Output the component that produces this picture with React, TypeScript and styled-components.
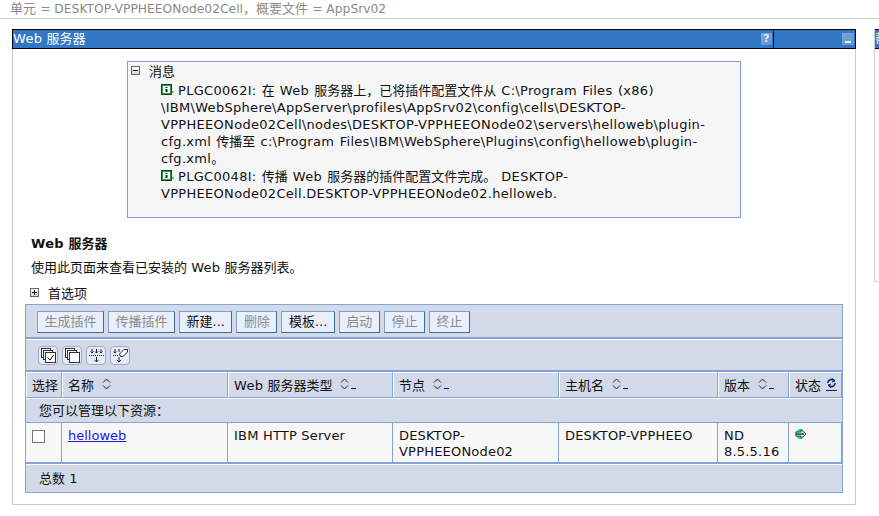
import React from 'react'
import styled, { createGlobalStyle } from 'styled-components'

const sans = '"DejaVu Sans", "Noto Sans CJK SC", sans-serif'

const Global = createGlobalStyle`
  html, body {
    margin: 0;
    padding: 0;
    background: #fff;
    font-family: ${sans};
    font-size: 13px;
    color: #111;
    overflow: hidden;
  }
`

const Page = styled.div`
  width: 879px;
  height: 516px;
  overflow: hidden;
`
const Scope = styled.div`
  height: 19px;
  box-sizing: border-box;
  padding-left: 10px;
  line-height: 18px;
  color: #8a8a8a;
  border-bottom: 1px solid #ccc;
  white-space: nowrap;
`
const ScopeLatin = styled.span`
  font-size: 12.3px;
`
const Columns = styled.div`
  display: flex;
  align-items: flex-start;
  padding: 10px 0 0 12px;
  gap: 18px;
`
const Portlet = styled.div`
  width: 844px;
  flex: none;
`
const TitleBar = styled.div`
  display: flex;
  height: 20px;
  box-sizing: border-box;
  background: #3277c6;
  border: 1px solid #000;
  color: #fff;
  line-height: 17px;
`
const TitleText = styled.div`
  flex: 1;
`
const TitleCell = styled.div<{ $w: number; $line?: boolean }>`
  width: ${(p) => p.$w}px;
  display: flex;
  justify-content: flex-end;
  align-items: center;
  padding-right: 1px;
  box-sizing: border-box;
  border-right: ${(p) => (p.$line ? '1px solid #000' : 'none')};
`
const HelpBtn = styled.div`
  width: 11px;
  height: 12px;
  background: linear-gradient(135deg, #7ea8da, #5b90cf);
  color: #dfe8f5;
  font-size: 11px;
  font-weight: bold;
  line-height: 12px;
  text-align: center;
`
const MinBtn = styled.div`
  width: 12px;
  height: 12px;
  background: linear-gradient(135deg, #7ea8da, #5b90cf);
  display: flex;
  align-items: flex-end;
  justify-content: center;
  padding-bottom: 2px;
  box-sizing: border-box;
  &::before {
    content: '';
    width: 6px;
    height: 2px;
    background: #eaf0f8;
  }
`
const Body = styled.div`
  height: 456px;
  border: 1px solid #ccc;
  border-top: none;
  box-sizing: border-box;
  padding-top: 12px;
`
const MsgBox = styled.div`
  width: 614px;
  height: 157px;
  margin-left: 114px;
  box-sizing: border-box;
  border: 1px solid #7f9ed3;
  background: #f6f6f6;
  padding: 0 0 0 3px;
`
const MsgHead = styled.div`
  display: flex;
  align-items: center;
  height: 16px;
  gap: 9px;
`
const Toggle = styled.span`
  width: 7px;
  height: 7px;
  border: 1px solid #666;
  background: linear-gradient(#fff, #cfd4dc);
  position: relative;
  flex: none;
  &::before {
    content: '';
    position: absolute;
    left: 1px;
    right: 1px;
    top: 3px;
    height: 1px;
    background: #000;
  }
`
const TogglePlus = styled(Toggle)`
  &::after {
    content: '';
    position: absolute;
    top: 1px;
    bottom: 1px;
    left: 3px;
    width: 1px;
    background: #000;
  }
`
const MsgList = styled.div`
  padding: 4px 0 0 30px;
`
const Msg = styled.div`
  margin-bottom: 1px;
`
const MsgRow = styled.div`
  line-height: 17px;
  white-space: nowrap;
  word-spacing: 1px;
`
const L = styled.span`
  letter-spacing: 0.3px;
`
const Intro = styled.div`
  padding: 18px 0 0 18px;
`
const H2 = styled.div`
  font-weight: bold;
  line-height: 16px;
`
const Desc = styled.div`
  margin-top: 8px;
  line-height: 16px;
`
const Prefs = styled.div`
  display: flex;
  align-items: center;
  height: 16px;
  gap: 9px;
  margin: 8px 0 0 -1px;
`
const Collection = styled.div`
  width: 818px;
  margin: 4px 0 0 12px;
  box-sizing: border-box;
  border: 1px solid #86a3d6;
  background: #d2d9e8;
`
const ButtonBar = styled.div`
  display: flex;
  gap: 4px;
  height: 34px;
  padding: 6px 0 0 11px;
  box-sizing: border-box;
  border-bottom: 2px solid #86a3d6;
`
const Btn = styled.div<{ $off?: boolean }>`
  height: 22px;
  box-sizing: border-box;
  padding: 0 6.5px;
  line-height: 20px;
  background: #e9f0fb;
  border: 1px solid #7d9fc8;
  border-right-color: #3d6c9e;
  border-bottom-color: #3d6c9e;
  color: ${(p) => (p.$off ? '#8c8c8c' : '#111')};
  white-space: nowrap;
`
const IconBar = styled.div`
  display: flex;
  gap: 4px;
  height: 33px;
  padding: 6px 0 0 12px;
  box-sizing: border-box;
  border-top: 1px solid #fff;
  border-bottom: 2px solid #86a3d6;
`
const IconBtn = styled.div`
  width: 18px;
  height: 17px;
  border: 1px solid #9dacc8;
  border-radius: 4px;
  background: #e6ebf5;
  display: flex;
  align-items: center;
  justify-content: center;
`
const Grid = styled.div`
  display: grid;
  grid-template-columns: 36px 166px 165px 166px 159px 71px 53px;
`
const Head = styled.div`
  height: 26px;
  box-sizing: border-box;
  padding: 0 0 2px 5px;
  border-top: 1px solid #fff;
  border-left: 1px solid #fff;
  border-right: 1px solid #86a3d6;
  border-bottom: 1px solid #86a3d6;
  display: flex;
  align-items: center;
  white-space: nowrap;
`
const Wide = styled.div`
  grid-column: 1 / -1;
  box-sizing: border-box;
  padding-left: 13px;
`
const Group = styled(Wide)`
  height: 25px;
  line-height: 24px;
  border-top: 1px solid #fff;
  border-bottom: 1px solid #86a3d6;
`
const Total = styled(Wide)`
  height: 28px;
  line-height: 27px;
  border-top: 1px solid #fff;
`
const Cell = styled.div`
  height: 41px;
  box-sizing: border-box;
  padding: 5px 2px 0 6px;
  line-height: 16px;
  background: #f7f7f7;
  border-right: 1px solid #86a3d6;
  border-bottom: 2px solid #86a3d6;
  letter-spacing: 0.2px;
`
const Check = styled.div`
  width: 11px;
  height: 11px;
  margin-top: 2px;
  background: #fff;
  border: 1px solid #767676;
`
const NameLink = styled.a`
  color: #1a1ae6;
  letter-spacing: 0;
  text-decoration: underline;
`
const SortGap = styled.span`
  display: flex;
  align-items: center;
  margin-left: 8px;
`
const SortLink = styled.span`
  width: 5px;
  height: 1px;
  margin: 9px 0 0 2px;
  background: #00c;
`
const Side = styled.div`
  flex: 1;
  height: 253px;
  min-width: 0;
  overflow: hidden;
  box-sizing: border-box;
  border-left: 1px solid #ccc;
  border-bottom: 1px solid #ccc;
`
const SideBar = styled.div`
  height: 20px;
  box-sizing: border-box;
  background: #3277c6;
  border-top: 1px solid #000;
  border-bottom: 1px solid #000;
  color: #fff;
  line-height: 17px;
  white-space: nowrap;
`

const SortIcon = () => (
  <svg width="9" height="12" viewBox="0 0 9 12" fill="none" stroke="#222">
    <path d="M1 4.5 4.5 1 8 4.5M1 7.5 4.5 11 8 7.5" />
  </svg>
)

const InfoIcon = () => (
  <svg width="13" height="12" viewBox="0 0 13 12" style={{ verticalAlign: '-1px', marginRight: 4 }}>
    <rect x="0.5" y="0.5" width="10" height="10" fill="#2c9a3a" stroke="#0b4a16" />
    <rect x="2" y="2" width="7" height="7" fill="#fff" />
    <path d="M4.5 3h2v1h-2zM4.5 5h2v3h-2z" fill="#123" />
    <path d="M11 8h2" stroke="#555" />
  </svg>
)

const RefreshIcon = () => (
  <svg width="11" height="14" viewBox="0 0 11 14" fill="none" stroke="#06207a" strokeWidth="1.5" style={{ marginLeft: 5 }}>
    <path d="M1.8 6a3.7 3.7 0 0 1 6.2-2.6M9.2 6a3.7 3.7 0 0 1-6.2 2.6" />
    <path d="M6.5 1.5 9 4 6 5M4.5 10.5 2 8l3-1" strokeWidth="1" />
    <path d="M0 13.5h11" stroke="#222" strokeWidth="1" />
  </svg>
)

const RunIcon = () => (
  <svg width="12" height="12" viewBox="0 0 12 12">
    <path d="M3.5 1H6.5L11.5 6 6.5 11H3.5L.5 8V4z" fill="#35d6a6" />
    <path d="M6 1.5 11 6 6 10.5V8H1V4H6z" fill="#dff5ec" stroke="#1c5a3c" />
    <path d="M1 6h8" stroke="#14402a" strokeWidth="1.4" />
  </svg>
)

const SelectAllIcon = () => (
  <svg width="15" height="15" viewBox="0 0 15 15" fill="#f4f6fb" stroke="#333">
    <rect x="0.5" y="0.5" width="9" height="9" />
    <rect x="2.5" y="2.5" width="9" height="9" />
    <rect x="4.5" y="4.5" width="10" height="10" fill="#fff" />
    <path d="M6.5 9.5 9 12l3.5-5" fill="none" stroke="#111" />
  </svg>
)

const DeselectIcon = () => (
  <svg width="15" height="15" viewBox="0 0 15 15" fill="#f4f6fb" stroke="#333">
    <rect x="0.5" y="0.5" width="9" height="9" />
    <rect x="2.5" y="2.5" width="9" height="9" />
    <rect x="4.5" y="4.5" width="10" height="10" fill="#fff" />
  </svg>
)

const FilterIcon = () => (
  <svg width="15" height="15" viewBox="0 0 15 15" fill="none" stroke="#223">
    <path d="M3 1v4M1.5 3.5 3 5l1.5-1.5M7.5 1v4M6 3.5 7.5 5 9 3.5M12 1v4M10.5 3.5 12 5l1.5-1.5" />
    <path d="M0 7.5h15" strokeDasharray="1 1" />
    <path d="M7.5 9v5M5.5 12 7.5 14l2-2" />
  </svg>
)

const ClearIcon = () => (
  <svg width="15" height="15" viewBox="0 0 15 15" fill="none" stroke="#223">
    <path d="M2 1v4M.8 3.5 2 5l1.2-1.5M6 1v3" />
    <path d="M0 7.5h6" strokeDasharray="1 1" />
    <path d="M6 9v5M4 12l2 2 2-2" />
    <path d="M6.5 6 11 1.5h3.5V4L10 8.5H7.5z" fill="#fff" />
  </svg>
)

const heads = [
  <span>名称</span>,
  <span><L>Web</L> 服务器类型</span>,
  <span>节点</span>,
  <span>主机名</span>,
  <span>版本</span>,
]
const buttons: [string, boolean][] = [
  ['生成插件', true],
  ['传播插件', true],
  ['新建...', false],
  ['删除', true],
  ['模板...', false],
  ['启动', true],
  ['停止', true],
  ['终止', true],
]

export default function App() {
  return (
    <Page>
      <Global />
      <Scope>
        单元 <ScopeLatin>= DESKTOP-VPPHEEONode02Cell</ScopeLatin>，概要文件 <ScopeLatin>= AppSrv02</ScopeLatin>
      </Scope>
      <Columns>
        <Portlet>
          <TitleBar>
            <TitleText><L>Web</L> 服务器</TitleText>
            <TitleCell $w={20} $line>
              <HelpBtn>?</HelpBtn>
            </TitleCell>
            <TitleCell $w={81}>
              <MinBtn />
            </TitleCell>
          </TitleBar>
          <Body>
            <MsgBox>
              <MsgHead>
                <Toggle />
                消息
              </MsgHead>
              <MsgList>
                <Msg>
                  <MsgRow>
                    <InfoIcon />
                    <L>PLGC0062I:</L> 在 <L>Web</L> 服务器上，已将插件配置文件从 <L>C:\Program Files (x86)</L>
                  </MsgRow>
                  <MsgRow><L>\IBM\WebSphere\AppServer\profiles\AppSrv02\config\cells\DESKTOP-</L></MsgRow>
                  <MsgRow><L>VPPHEEONode02Cell\nodes\DESKTOP-VPPHEEONode02\servers\helloweb\plugin-</L></MsgRow>
                  <MsgRow><L>cfg.xml</L> 传播至 <L>c:\Program Files\IBM\WebSphere\Plugins\config\helloweb\plugin-</L></MsgRow>
                  <MsgRow><L>cfg.xml</L>。</MsgRow>
                </Msg>
                <Msg>
                  <MsgRow>
                    <InfoIcon />
                    <L>PLGC0048I:</L> 传播 <L>Web</L> 服务器的插件配置文件完成。 <L>DESKTOP-</L>
                  </MsgRow>
                  <MsgRow><L>VPPHEEONode02Cell.DESKTOP-VPPHEEONode02.helloweb.</L></MsgRow>
                </Msg>
              </MsgList>
            </MsgBox>
            <Intro>
              <H2><L>Web</L> 服务器</H2>
              <Desc>使用此页面来查看已安装的 <L>Web</L> 服务器列表。</Desc>
              <Prefs>
                <TogglePlus />
                首选项
              </Prefs>
            </Intro>
            <Collection>
              <ButtonBar>
                {buttons.map(([label, off]) => (
                  <Btn key={label} $off={off}>
                    {label}
                  </Btn>
                ))}
              </ButtonBar>
              <IconBar>
                <IconBtn><SelectAllIcon /></IconBtn>
                <IconBtn><DeselectIcon /></IconBtn>
                <IconBtn><FilterIcon /></IconBtn>
                <IconBtn><ClearIcon /></IconBtn>
              </IconBar>
              <Grid>
                <Head>选择</Head>
                {heads.map((h, i) => (
                  <Head key={i}>
                    {h}
                    <SortGap><SortIcon /></SortGap>
                    {i > 0 && <SortLink />}
                  </Head>
                ))}
                <Head>
                  状态
                  <RefreshIcon />
                </Head>
                <Group>您可以管理以下资源：</Group>
                <Cell><Check /></Cell>
                <Cell><NameLink href="#">helloweb</NameLink></Cell>
                <Cell>IBM HTTP Server</Cell>
                <Cell>DESKTOP-VPPHEEONode02</Cell>
                <Cell>DESKTOP-VPPHEEO</Cell>
                <Cell>ND 8.5.5.16</Cell>
                <Cell><RunIcon /></Cell>
                <Total>总数 <L>1</L></Total>
              </Grid>
            </Collection>
          </Body>
        </Portlet>
        <Side>
          <SideBar>帮助</SideBar>
        </Side>
      </Columns>
    </Page>
  )
}
